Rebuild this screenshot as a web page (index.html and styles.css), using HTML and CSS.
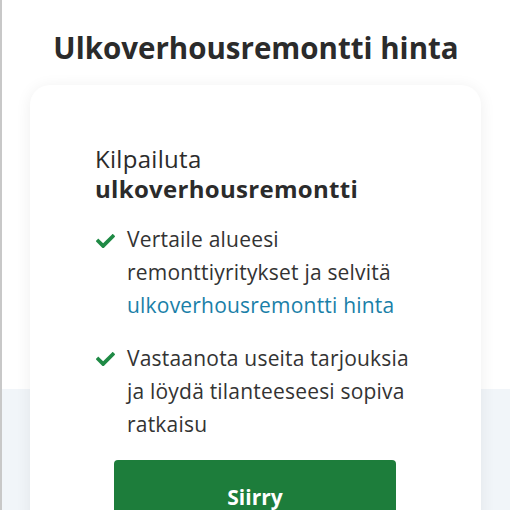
FILE: index.html
```html
<!DOCTYPE html>
<html lang="fi">
<head>
<meta charset="utf-8">
<link rel="stylesheet" href="styles.css">
</head>
<body>
<div class="page">
  <div class="band"></div>
  <h1 class="title">Ulkoverhousremontti hinta</h1>
  <div class="card">
    <h2 class="card-title">Kilpailuta <strong>ulkoverhousremontti</strong></h2>
    <ul class="list">
      <li class="item">
        <svg class="check" viewBox="0 62 512 388"><path d="M173.9 439.4l-166.4-166.4c-10-10-10-26.2 0-36.2l36.2-36.2c10-10 26.2-10 36.2 0L192 312.7 432.1 72.6c10-10 26.2-10 36.2 0l36.2 36.2c10 10 10 26.2 0 36.2l-294.4 294.4c-10 10-26.2 10-36.2 0z"/></svg>
        <span class="text">Vertaile alueesi remonttiyritykset ja selvitä <a class="link" href="#">ulkoverhousremontti hinta</a></span>
      </li>
      <li class="item">
        <svg class="check" viewBox="0 62 512 388"><path d="M173.9 439.4l-166.4-166.4c-10-10-10-26.2 0-36.2l36.2-36.2c10-10 26.2-10 36.2 0L192 312.7 432.1 72.6c10-10 26.2-10 36.2 0l36.2 36.2c10 10 10 26.2 0 36.2l-294.4 294.4c-10 10-26.2 10-36.2 0z"/></svg>
        <span class="text">Vastaanota useita tarjouksia ja löydä tilanteeseesi sopiva ratkaisu</span>
      </li>
    </ul>
    <a class="button" href="#">Siirry</a>
  </div>
</div>
</body>
</html>
```
FILE: styles.css
```css
html, body {
  margin: 0;
  padding: 0;
  background: #fff;
}
body {
  font-family: "Open Sans", "Noto Sans", sans-serif;
  color: #333;
  height: 510px;
  overflow: hidden;
}
.page {
  position: relative;
  height: 510px;
  border-left: 2px solid #c8c8c8;
  box-sizing: border-box;
}
.band {
  position: absolute;
  left: 0;
  right: 0;
  top: 389px;
  bottom: 0;
  background: #f1f5f9;
}
.title {
  position: relative;
  margin: 0;
  padding-top: 28px;
  text-align: center;
  font-size: 29.5px;
  font-weight: 700;
  line-height: 40px;
  color: #2b2b2b;
}
.card {
  position: relative;
  margin: 17px 29px 0 28px;
  background: #fff;
  border-radius: 20px;
  box-shadow: 0 2px 16px rgba(0, 0, 0, 0.07);
  padding: 59px 0 0 65px;
  height: 500px;
  box-sizing: border-box;
}
.card-title {
  margin: 0;
  font-size: 24px;
  font-weight: 400;
  line-height: 29.5px;
  letter-spacing: 0.3px;
  color: #2b2b2b;
}
.card-title strong {
  display: block;
  font-weight: 700;
}
.list {
  list-style: none;
  margin: 20px 0 0 0;
  padding: 0;
  display: flex;
  flex-direction: column;
  gap: 19.5px;
}
.item {
  display: flex;
  gap: 12px;
  font-size: 21px;
  line-height: 33px;
  letter-spacing: 0.2px;
  color: #333;
}
.text {
  width: 296px;
}
.check {
  flex: none;
  width: 19px;
  height: 14.4px;
  margin: 10.5px 0 0 1px;
  fill: #1f8a45;
}
.link {
  color: #1a7fa8;
  text-decoration: none;
}
.button {
  display: block;
  width: 282px;
  height: 74px;
  margin: 19px 0 0 19px;
  background: #1d7d3b;
  border-radius: 4px;
  color: #fff;
  font-weight: 700;
  font-size: 21px;
  text-align: center;
  line-height: 74px;
  text-decoration: none;
}
```
